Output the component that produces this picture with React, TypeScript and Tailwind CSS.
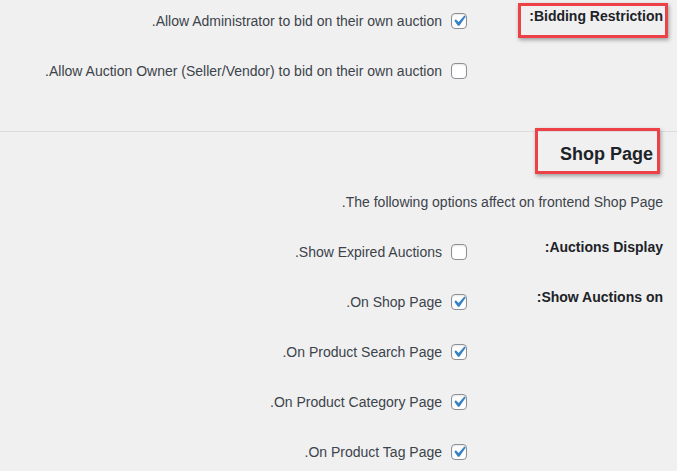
import React from "react";

function Check({ checked }: { checked: boolean }) {
  return (
    <span className="relative flex h-4 w-4 shrink-0 rounded-[4px] border border-[#8c8f94] bg-white shadow-[inset_0_1px_2px_rgba(0,0,0,0.1)]">
      {checked && (
        <svg viewBox="0 0 20 20" className="absolute left-[-4px] top-[-4px] h-[22px] w-[22px] overflow-visible">
          <path d="M14.83 4.89l1.34.94-5.81 8.38H9.02L5.78 9.67l1.34-1.25 2.57 2.4z" fill="#3582c4" />
        </svg>
      )}
    </span>
  );
}

function Row({ label, text, checked, h = "h-[50px]" }: { label?: string; text: string; checked: boolean; h?: string }) {
  return (
    <div className={`flex ${h} items-center`}>
      <div className="mb-[9px] w-[196px] shrink-0 text-[14px] font-bold text-[#1d2327]">{label}</div>
      <label className="flex items-center gap-[9px]">
        <Check checked={checked} />
        <span>{text}</span>
      </label>
    </div>
  );
}

export default function App() {
  return (
    <div
      dir="rtl"
      className="relative h-[471px] w-full overflow-hidden bg-[#f0f0f1] text-[14px] text-[#3c434a]"
      style={{ fontFamily: '"Liberation Sans", Arial, sans-serif' }}
    >
      <div className="pr-[14px]">
        <Row label="Bidding Restriction:" text="Allow Administrator to bid on their own auction." checked h="h-[42px]" />
        <Row text="Allow Auction Owner (Seller/Vendor) to bid on their own auction." checked={false} h="h-[58px]" />
      </div>
      <div className="h-[31px]" />
      <div className="border-t border-[#dcdcde] pr-[24px]">
        <div className="flex h-[45px] items-center text-[18px] font-bold text-[#1d2327]">Shop Page</div>
      </div>
      <div className="pr-[14px]">
        <div className="flex h-[50px] items-center">The following options affect on frontend Shop Page.</div>
        <Row label="Auctions Display:" text="Show Expired Auctions." checked={false} />
        <Row label="Show Auctions on:" text="On Shop Page." checked />
        <Row text="On Product Search Page." checked />
        <Row text="On Product Category Page." checked />
        <Row text="On Product Tag Page." checked />
      </div>

      {/* annotation boxes */}
      <div className="absolute left-[518px] top-[3px] h-[35px] w-[150px] border-[3px] border-[#ec4146] shadow-[1px_2px_4px_rgba(0,0,0,0.35)]" />
      <div className="absolute left-[535px] top-[128px] h-[46px] w-[125px] border-[3px] border-[#ec4146] shadow-[1px_2px_4px_rgba(0,0,0,0.35)]" />
    </div>
  );
}
